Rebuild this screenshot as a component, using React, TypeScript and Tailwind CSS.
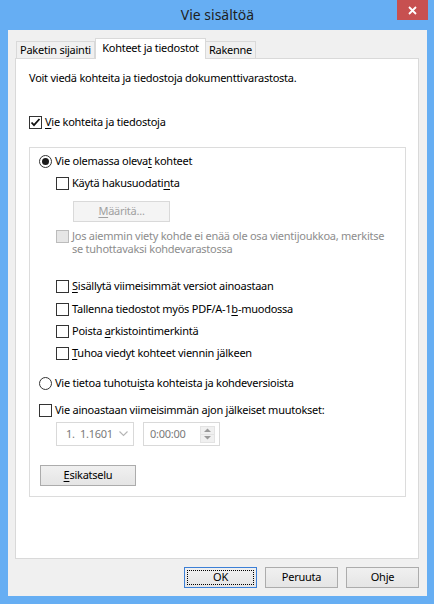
import React from 'react';

const FONT = { fontFamily: '"Noto Sans", "Open Sans", sans-serif' };

function CheckBox({ checked = false, disabled = false }: { checked?: boolean; disabled?: boolean }) {
  return (
    <span
      className={`w-[13px] h-[13px] shrink-0 border flex items-center justify-center ${
        disabled ? 'border-[#bcbcbc] bg-[#e6e6e6]' : 'border-[#333333] bg-white'
      }`}
    >
      {checked && (
        <svg width="11" height="11" viewBox="0 0 11 11">
          <path d="M1.5 5.5l2.5 2.7L9.5 2" fill="none" stroke="#111" strokeWidth="1.8" />
        </svg>
      )}
    </span>
  );
}

function Radio({ checked = false }: { checked?: boolean }) {
  return (
    <span className="w-[13px] h-[13px] shrink-0 rounded-full border border-[#333333] bg-white flex items-center justify-center">
      {checked && <span className="w-[7px] h-[7px] rounded-full bg-[#1a1a1a]" />}
    </span>
  );
}

// accelerator letter
function U({ children }: { children: React.ReactNode }) {
  return <span className="underline underline-offset-2">{children}</span>;
}

function Row({ children, className = '' }: { children: React.ReactNode; className?: string }) {
  return <div className={`h-[20px] flex items-center gap-[3px] ${className}`}>{children}</div>;
}

function Button({ label, isDefault = false, disabled = false }: { label: React.ReactNode; isDefault?: boolean; disabled?: boolean }) {
  return (
    <div
      className={`h-[21px] flex items-center justify-center border ${
        disabled
          ? 'border-[#d9d9d9] bg-[#f4f4f4] text-[#a0a0a0]'
          : isDefault
          ? 'border-[#3c7fd6] bg-gradient-to-b from-[#f0f0f0] to-[#e5e5e5] p-[2px]'
          : 'border-[#acacac] bg-gradient-to-b from-[#f0f0f0] to-[#e5e5e5]'
      }`}
    >
      {isDefault ? (
        <div className="w-full h-full border border-dotted border-black flex items-center justify-center">{label}</div>
      ) : (
        label
      )}
    </div>
  );
}

export default function App() {
  return (
    <div
      className="w-[434px] h-[604px] bg-[#66aef3] pl-[8px] pr-[7px] pb-[8px] flex flex-col text-[11px] tracking-[-0.25px] text-black"
      style={FONT}
    >
      {/* Title bar */}
      <div className="h-[30px] relative flex items-center justify-center">
        <span className="text-[14px] text-[#1e1e1e] tracking-normal -mt-[1px]">Vie sisältöä</span>
        <div className="absolute -right-[1px] top-0 w-[31px] h-[20px] bg-[#c75050] flex items-center justify-center">
          <svg width="9" height="9" viewBox="0 0 9 9">
            <path d="M1 1l7 7M8 1l-7 7" stroke="#fff" strokeWidth="1.8" />
          </svg>
        </div>
      </div>

      {/* Client area */}
      <div className="flex-1 bg-[#f0f0f0] flex flex-col">
        {/* Tabs */}
        <div className="mt-[8px] ml-[8px] h-[20px] flex items-end">
          <div className="w-[79px] h-[17px] border border-b-0 border-[#d9d9d9] bg-[#f0f0f0] flex items-center justify-center">
            Paketin sijainti
          </div>
          <div className="w-[111px] h-[21px] -mb-px relative z-10 border border-b-0 border-[#d9d9d9] bg-white flex items-center justify-center pb-[2px]">
            Kohteet ja tiedostot
          </div>
          <div className="w-[50px] h-[17px] border border-b-0 border-l-0 border-[#d9d9d9] bg-[#f0f0f0] flex items-center justify-center">
            Rakenne
          </div>
        </div>

        {/* Tab panel */}
        <div className="ml-[7px] w-[404px] h-[501px] border border-[#d9d9d9] bg-white pl-[13px] flex flex-col">
          <Row className="mt-[9px]">Voit viedä kohteita ja tiedostoja dokumenttivarastosta.</Row>
          <Row className="mt-[24px]">
            <CheckBox checked />
            <span>
              <U>V</U>ie kohteita ja tiedostoja
            </span>
          </Row>

          {/* Group */}
          <div className="mt-[15px] w-[377px] h-[350px] border border-[#dcdcdc] pl-[9px] flex flex-col">
            <Row className="mt-[3px]">
              <Radio checked />
              <span>
                Vie olemassa oleva<U>t</U> kohteet
              </span>
            </Row>
            <div className="pl-[17px] flex flex-col">
              <Row className="mt-[2px]">
                <CheckBox />
                <span>
                  Käytä hakusuodati<U>n</U>ta
                </span>
              </Row>
              <div className="mt-[8px] ml-[17px] w-[97px]">
                <Button
                  disabled
                  label={
                    <span>
                      <U>M</U>ääritä...
                    </span>
                  }
                />
              </div>
              <div className="mt-[7px] flex gap-[3px] text-[#8d8d8d] leading-[13px]">
                <div className="pt-[1px]">
                  <CheckBox disabled />
                </div>
                <span className="w-[325px]">
                  Jos aiemmin viety kohde ei enää ole osa vientijoukkoa, merkitse se tuhottavaksi kohdevarastossa
                </span>
              </div>
              <Row className="mt-[21px]">
                <CheckBox />
                <span>
                  <U>S</U>isällytä viimeisimmät versiot ainoastaan
                </span>
              </Row>
              <Row className="mt-[3px]">
                <CheckBox />
                <span>
                  Tallenna tiedostot myös PDF/A-1<U>b</U>-muodossa
                </span>
              </Row>
              <Row className="mt-[2px]">
                <CheckBox />
                <span>
                  Poista <U>a</U>rkistointimerkintä
                </span>
              </Row>
              <Row className="mt-[2px]">
                <CheckBox />
                <span>
                  <U>T</U>uhoa viedyt kohteet viennin jälkeen
                </span>
              </Row>
            </div>
            <Row className="mt-[10px]">
              <Radio />
              <span>
                Vie tietoa tuhotui<U>s</U>ta kohteista ja kohdeversioista
              </span>
            </Row>
            <Row className="mt-[7px]">
              <CheckBox />
              <span>
                Vie ainoastaan viimeisimmän ajon <U>j</U>älkeiset muutokset:
              </span>
            </Row>
            <div className="mt-[2px] ml-[17px] flex gap-[9px] text-[#7a7a7a]">
              <div className="w-[78px] h-[24px] border border-[#d9d9d9] bg-white flex items-center pl-[9px] pr-[5px]">
                <span className="flex-1">1.&nbsp;&nbsp;1.1601</span>
                <svg width="9" height="6" viewBox="0 0 9 6">
                  <path d="M0.5 0.5l4 4 4-4" fill="none" stroke="#b5b5b5" strokeWidth="1.1" />
                </svg>
              </div>
              <div className="w-[77px] h-[24px] border border-[#d9d9d9] bg-white flex items-center pl-[6px] pr-[4px]">
                <span className="flex-1">0:00:00</span>
                <div className="w-[15px] h-[17px] flex flex-col border border-[#e3e3e3]">
                  <div className="flex-1 bg-[#f0f0f0] border-b border-[#e3e3e3] flex items-center justify-center">
                    <svg width="7" height="4" viewBox="0 0 7 4">
                      <path d="M0 4L3.5 0.5 7 4z" fill="#9a9a9a" />
                    </svg>
                  </div>
                  <div className="flex-1 bg-[#f0f0f0] flex items-center justify-center">
                    <svg width="7" height="4" viewBox="0 0 7 4">
                      <path d="M0 0L3.5 3.5 7 0z" fill="#9a9a9a" />
                    </svg>
                  </div>
                </div>
              </div>
            </div>
            <div className="mt-[19px] ml-[1px] w-[96px]">
              <Button
                label={
                  <span>
                    <U>E</U>sikatselu
                  </span>
                }
              />
            </div>
          </div>
        </div>

        {/* Dialog buttons */}
        <div className="mt-[8px] pr-[8px] flex justify-end gap-[8px]">
          <div className="w-[73px]">
            <Button isDefault label="OK" />
          </div>
          <div className="w-[73px]">
            <Button label="Peruuta" />
          </div>
          <div className="w-[73px]">
            <Button label="Ohje" />
          </div>
        </div>
      </div>
    </div>
  );
}
